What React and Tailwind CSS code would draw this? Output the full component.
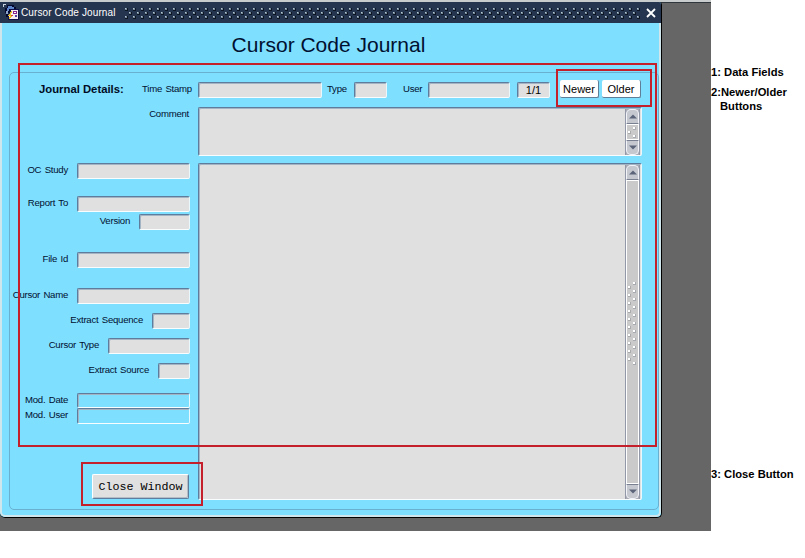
import React from "react";

const fieldBase =
  "shrink-0 rounded-[2px] border border-t-[#5f7c9c] border-l-[#5f7c9c] border-r-[#e9f8fc] border-b-[#fafdfe] shadow-[inset_1px_1px_0_#a3b4c4]";

function Field({ className = "", height = "h-4", children }) {
  return <div className={`${fieldBase} ${height} ${className}`}>{children}</div>;
}

function Label({ className = "", children }) {
  return (
    <span className={`block whitespace-nowrap text-[9.6px] leading-[13px] tracking-[-0.25px] text-[#001030] [word-spacing:1px] ${className}`}>
      {children}
    </span>
  );
}

function Row({ label, width, top, bg = "bg-[#e0e0e0]", height }) {
  return (
    <div className={`flex shrink-0 items-start justify-end gap-[9px] ${top}`}>
      <Label>{label}</Label>
      <Field className={`${width} ${bg}`} height={height} />
    </div>
  );
}

function Arrow({ down }) {
  return (
    <div
      className={`flex h-[15px] w-full shrink-0 items-center justify-center border border-[#f2f4fa] bg-[#c6c8d0] ${
        down ? "rounded-b-[5px] border-t-[#777f90]" : "rounded-t-[5px] border-b-[#777f90]"
      }`}
    >
      <svg width="8" height="5" viewBox="0 0 8 5">
        <path d={down ? "M0 0.5H8L4 4.5Z" : "M0 4.5H8L4 0.5Z"} fill="#5b6478" />
      </svg>
    </div>
  );
}

function Grip({ count, className = "" }) {
  return (
    <svg width="11" height={count * 8 + 4} className={`shrink-0 ${className}`} shapeRendering="crispEdges">
      {Array.from({ length: count + 1 }, (_, i) => (
        <g key={i}>
          {i < count && <rect x="1" y={i * 8 + 5} width="3" height="3" fill="#a9aaac" />}
          {i < count && <rect x="1" y={i * 8 + 5} width="2" height="2" fill="#ffffff" />}
          <rect x="6" y={i * 8 + 1} width="3" height="3" fill="#a9abb2" />
          <rect x="6" y={i * 8 + 1} width="2" height="2" fill="#ffffff" />
        </g>
      ))}
    </svg>
  );
}

function TextArea({ height, grips, gripClass }) {
  return (
    <div className={`${fieldBase} flex bg-[#e0e0e0] pt-px pr-px ${height}`}>
      <div className="flex-1" />
      <div className="flex w-[15px] flex-col border-x border-[#9298a8] bg-[#a9abb5]">
        <Arrow />
        <div className="flex min-h-0 flex-1 items-center justify-center overflow-hidden border border-white bg-[#cacaca]">
          <Grip count={grips} className={gripClass} />
        </div>
        <Arrow down />
      </div>
    </div>
  );
}

function AppIcon() {
  return (
    <svg width="16" height="17" viewBox="0 0 16 17" shapeRendering="crispEdges">
      <path d="M0 0h3v1H1v2H0z" fill="#c8d0dc" />
      <path d="M4 1h7v2h2v3H9v3H5v4H3V9H2V4h2z" fill="#05082e" />
      <path d="M5 2h4v1h2v2H6v2H4V4h1z" fill="#5c83c8" />
      <path d="M3 7h2v3H3z" fill="#8ba4c8" />
      <path d="M7 5h9v11H5v-5h2z" fill="#10104a" />
      <path d="M8 6h7v9H6v-3h2z" fill="#f4eef4" />
      <path d="M10 7h4v3h-4z" fill="#86268e" />
      <path d="M11 8h2v1h-2z" fill="#fff" />
      <path d="M12 11h2v2h-2z" fill="#5140a0" />
      <path d="M8 7h1v2H8v2h2v1H9v1H8v1H7v1H6v-2h1v-1H5v-1h1v-1h1V8h1z" fill="#e9bf2c" />
      <path d="M8 11h2v1H8z" fill="#d84535" />
    </svg>
  );
}

function TitleBar() {
  return (
    <div className="flex h-[21px] shrink-0 items-center bg-[#26354f] pl-[3px] pr-[4px]">
      <AppIcon />
      <span className="ml-[2px] w-[103px] whitespace-nowrap text-[10px] leading-[20px] tracking-[0.12px] text-white">
        Cursor Code Journal
      </span>
      <svg width="516" height="12" className="shrink-0" shapeRendering="crispEdges">
        <defs>
          <pattern id="studs" width="8" height="8" patternUnits="userSpaceOnUse">
            <path d="M1 1h3v3H1zM5 5h3v3H5z" fill="#0c1524" />
            <path d="M1 1h2v2H1zM5 5h2v2H5z" fill="#75899a" />
            <path d="M1 1h1v1H1zM5 5h1v1H5z" fill="#b4c6d0" />
          </pattern>
        </defs>
        <rect width="516" height="12" fill="url(#studs)" />
      </svg>
      <svg width="12" height="12" viewBox="0 0 12 12" className="ml-auto shrink-0">
        <path d="M2 2L10 10M10 2L2 10" stroke="#fff" strokeWidth="1.8" />
      </svg>
    </div>
  );
}

const navButton =
  "h-[18px] shrink-0 rounded-[2px] border-r border-b border-[#5f7f99] bg-white text-center text-[11px] leading-[18px] text-black";

function Highlight({ className }) {
  return <div className={`pointer-events-none absolute border-2 border-[#c3202c] ${className}`} />;
}

export default function App() {
  return (
    <div className="relative flex h-[558px] w-[805px] overflow-hidden bg-white font-['Liberation_Sans',Arial,sans-serif]">
      <div className="h-[531px] w-[711px] shrink-0 border-t-2 border-[#c9cccd] bg-[#666666] shadow-[inset_0_1px_0_#30363c]">
        <div className="flex h-[516px] w-[662px] flex-col overflow-hidden rounded-b-[5px] rounded-tr-[3px] border-r border-b border-black bg-[#7fdfff]">
          <TitleBar />
          <div className="flex flex-1 flex-col rounded-b-[5px] border-r-2 border-b-2 border-l-2 border-[#cfe6ec] pl-[7px]">
            <h1 className="h-[49px] pr-[11px] pt-[10px] text-center text-[21px] leading-[24px] text-[#001030]">
              Cursor Code Journal
            </h1>
            <div className="flex h-[438px] w-[650px] flex-col rounded-[5px] border border-[#69afd0]">
              <div className="flex h-[34px] shrink-0 items-start pt-[9px]">
                <b className="ml-[29px] w-[103px] whitespace-nowrap text-[11.3px] leading-[15px] text-[#000c24]">
                  Journal Details:
                </b>
                <Label className="w-[56px]">Time Stamp</Label>
                <Field className="w-[124px] bg-[#e0e0e0]" />
                <Label className="ml-[5px] w-[27px]">Type</Label>
                <Field className="w-[33px] bg-[#e0e0e0]" />
                <Label className="ml-[16px] w-[25px]">User</Label>
                <Field className="w-[82px] bg-[#e0e0e0]" />
                <Field className="ml-[7px] w-[33px] bg-[#e0e0e0] text-center text-[11px] leading-[15px] text-black">
                  1/1
                </Field>
                <button className={`${navButton} ml-[10px] -mt-[2px] w-[39px]`}>Newer</button>
                <button className={`${navButton} ml-[3px] -mt-[2px] w-[39px]`}>Older</button>
              </div>
              <div className="flex">
                <div className="flex w-[180px] shrink-0 flex-col">
                  <div className="flex h-4 justify-end">
                    <Label className="pr-px">Comment</Label>
                  </div>
                  <Row label="OC Study" width="w-[113px]" top="mt-[40px]" />
                  <Row label="Report To" width="w-[113px]" top="mt-[17px]" />
                  <Row label="Version" width="w-[51px]" top="mt-[2px]" />
                  <Row label="File Id" width="w-[113px]" top="mt-[22px]" />
                  <Row label="Cursor Name" width="w-[113px]" top="mt-[20px]" />
                  <Row label="Extract Sequence" width="w-[38px]" top="mt-[9px]" />
                  <Row label="Cursor Type" width="w-[82px]" top="mt-[9px]" />
                  <Row label="Extract Source" width="w-[32px]" top="mt-[9px]" />
                  <Row label="Mod. Date" width="w-[113px]" top="mt-[14px]" bg="bg-[#7fdfff]" height="h-[15px]" />
                  <Row label="Mod. User" width="w-[113px]" top="mt-0" bg="bg-[#7fdfff]" />
                  <button className="mt-[50px] mr-px h-[25px] w-[97px] shrink-0 self-end whitespace-nowrap rounded-[2px] border border-t-white border-l-white border-r-[#5f7c9c] border-b-[#5f7c9c] bg-[#e0e0e0] pt-px font-['Liberation_Mono',monospace] text-[11.7px] leading-[22px] text-black shadow-[inset_-1px_-1px_0_#b4bdc6]">
                    Close Window
                  </button>
                </div>
                <div className="ml-2 flex w-[444px] flex-col gap-[7px]">
                  <TextArea height="h-[49px]" grips={1} />
                  <TextArea height="h-[337px]" grips={10} gripClass="-mt-[18px]" />
                </div>
              </div>
            </div>
          </div>
        </div>
      </div>

      <aside className="flex flex-col pt-[65px] text-[11.2px] font-bold leading-[14px] text-black">
        <p className="whitespace-nowrap">1: Data Fields</p>
        <p className="mt-[6px] whitespace-nowrap">2:Newer/Older</p>
        <p className="ml-[9px] whitespace-nowrap">Buttons</p>
        <p className="mt-[354px] whitespace-nowrap">3: Close Button</p>
      </aside>

      <Highlight className="left-[18px] top-[63px] h-[384px] w-[639px]" />
      <Highlight className="left-[556px] top-[69px] h-[38px] w-[96px]" />
      <Highlight className="left-[81px] top-[462px] h-[44px] w-[122px]" />
    </div>
  );
}
